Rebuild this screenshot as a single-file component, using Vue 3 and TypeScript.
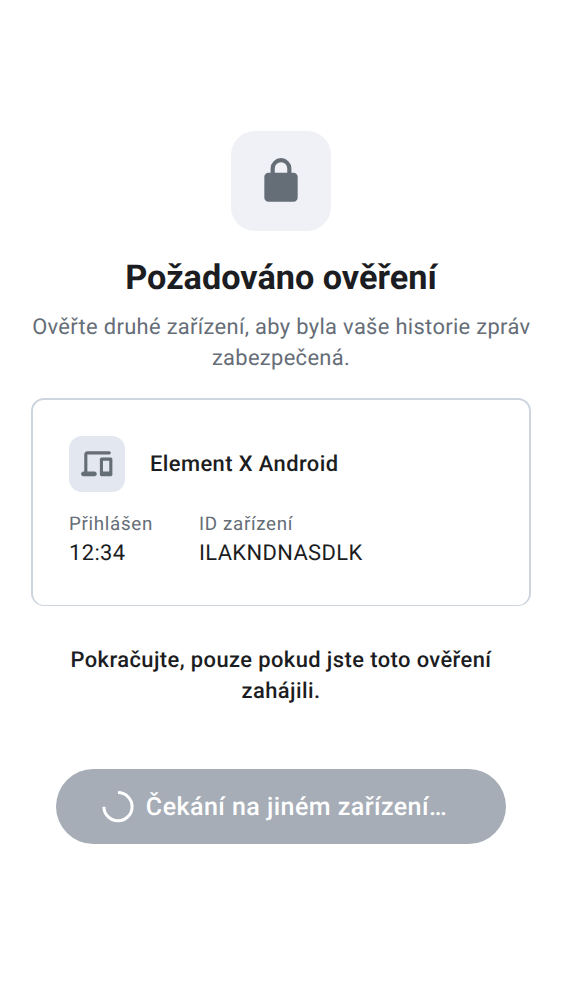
<script setup lang="ts">
interface Detail { label: string; value: string }
const details: Detail[] = [
  { label: 'Přihlášen', value: '12:34' },
  { label: 'ID zařízení', value: 'ILAKNDNASDLK' },
]
</script>

<template>
  <main class="screen">
    <div class="hero">
      <svg viewBox="0 0 24 24" width="50" height="50" fill="#656d77">
        <path d="M6 22q-.824 0-1.412-.587A1.93 1.93 0 0 1 4 20V10q0-.825.588-1.412A1.93 1.93 0 0 1 6 8h1V6q0-2.075 1.463-3.537Q9.926 1 12 1q2.075 0 3.537 1.463Q17 3.925 17 6v2h1q.824 0 1.413.588Q20 9.175 20 10v10q0 .824-.587 1.413A1.93 1.93 0 0 1 18 22zM9 8h6V6q0-1.250-.875-2.125A2.900 2.900 0 0 0 12 3q-1.250 0-2.125.875A2.900 2.900 0 0 0 9 6z" />
      </svg>
    </div>
    <h1>Požadováno ověření</h1>
    <p class="subtitle">Ověřte druhé zařízení, aby byla vaše historie zpráv<br />zabezpečená.</p>
    <section class="card">
      <div class="device">
        <div class="device-icon">
          <svg viewBox="0 0 24 24" width="37.500" height="37.500" fill="#656d77">
            <path d="M3.500 20q-.625 0-1.062-.438A1.450 1.450 0 0 1 2 18.500q0-.625.438-1.062A1.450 1.450 0 0 1 3.500 17H4V6q0-.824.588-1.412A1.930 1.930 0 0 1 6 4h14q.424 0 .712.287Q21 4.576 21 5t-.288.713A.970.970 0 0 1 20 6H6v11h4.500q.625 0 1.063.438.437.437.437 1.062t-.437 1.063A1.450 1.450 0 0 1 10.500 20zM15 20a.970.970 0 0 1-.712-.288A.970.970 0 0 1 14 19V9q0-.424.288-.713A.970.970 0 0 1 15 8h6q.424 0 .712.287Q22 8.576 22 9v10q0 .424-.288.712A.970.970 0 0 1 21 20zm1-3h4v-7h-4z" />
          </svg>
        </div>
        <span class="device-name">Element X Android</span>
      </div>
      <dl class="details">
        <div v-for="d in details" :key="d.label">
          <dt>{{ d.label }}</dt>
          <dd>{{ d.value }}</dd>
        </div>
      </dl>
    </section>
    <p class="notice">Pokračujte, pouze pokud jste toto ověření<br />zahájili.</p>
    <button class="wait" disabled>
      <svg viewBox="0 0 32 32" width="32" height="32" fill="none" stroke="#fff" stroke-width="3">
        <path d="M16 1.600A14.100 14.100 0 1 1 1.900 15.700" />
      </svg>
      <span>Čekání na jiném zařízení…</span>
    </button>
  </main>
</template>

<style>
body { margin: 0; background: #fff; }
</style>
<style scoped>
.screen { box-sizing: border-box; width: 562px; height: 1000px; padding-top: 131px; display: flex; flex-direction: column; align-items: center; font-family: Roboto, sans-serif; color: #1b1d22; background: #fff; text-rendering: geometricPrecision; }
.hero { width: 100px; height: 100px; border-radius: 24px; background: #f0f1f6; display: flex; align-items: center; justify-content: center; }
h1 { margin: 25px 0 0; font-size: 34.250px; line-height: 45px; font-weight: 700; white-space: nowrap; }
.subtitle { margin: 11px 0 0; font-size: 21.900px; line-height: 31px; letter-spacing: .33px; color: #656d77; text-align: center; white-space: nowrap; text-indent: .6px; }
.card { box-sizing: border-box; width: 500px; height: 208px; margin-top: 24px; padding: 36px 36px 0; border: 2px solid #cdd5df; border-bottom-width: 1px; border-radius: 13px; }
.device { display: flex; align-items: center; gap: 25px; }
.device-icon { width: 56px; height: 56px; border-radius: 13px; background: #e2e7f0; display: flex; align-items: center; justify-content: center; }
.device-name { font-size: 21.900px; font-weight: 500; letter-spacing: .42px; }
.details { margin: 20px 0 0; display: flex; gap: 46px; }
dt { font-size: 18.750px; line-height: 25px; letter-spacing: .68px; color: #656d77; }
dd { margin: 1px 0 0; font-size: 21.900px; line-height: 31px; letter-spacing: .39px; }
.notice { margin: 39px 0 0; font-size: 21.900px; line-height: 31px; font-weight: 500; letter-spacing: .42px; text-align: center; white-space: nowrap; }
.wait { width: 450px; height: 75px; margin-top: 62px; padding: 0 13px 0 0; border: 0; border-radius: 38px; background: #a6adb7; color: #fff; display: flex; align-items: center; justify-content: center; gap: 12px; font: 500 25px/36px Roboto, sans-serif; letter-spacing: .46px; white-space: nowrap; text-rendering: geometricPrecision; }
.wait span { padding-top: 2px; }
</style>
